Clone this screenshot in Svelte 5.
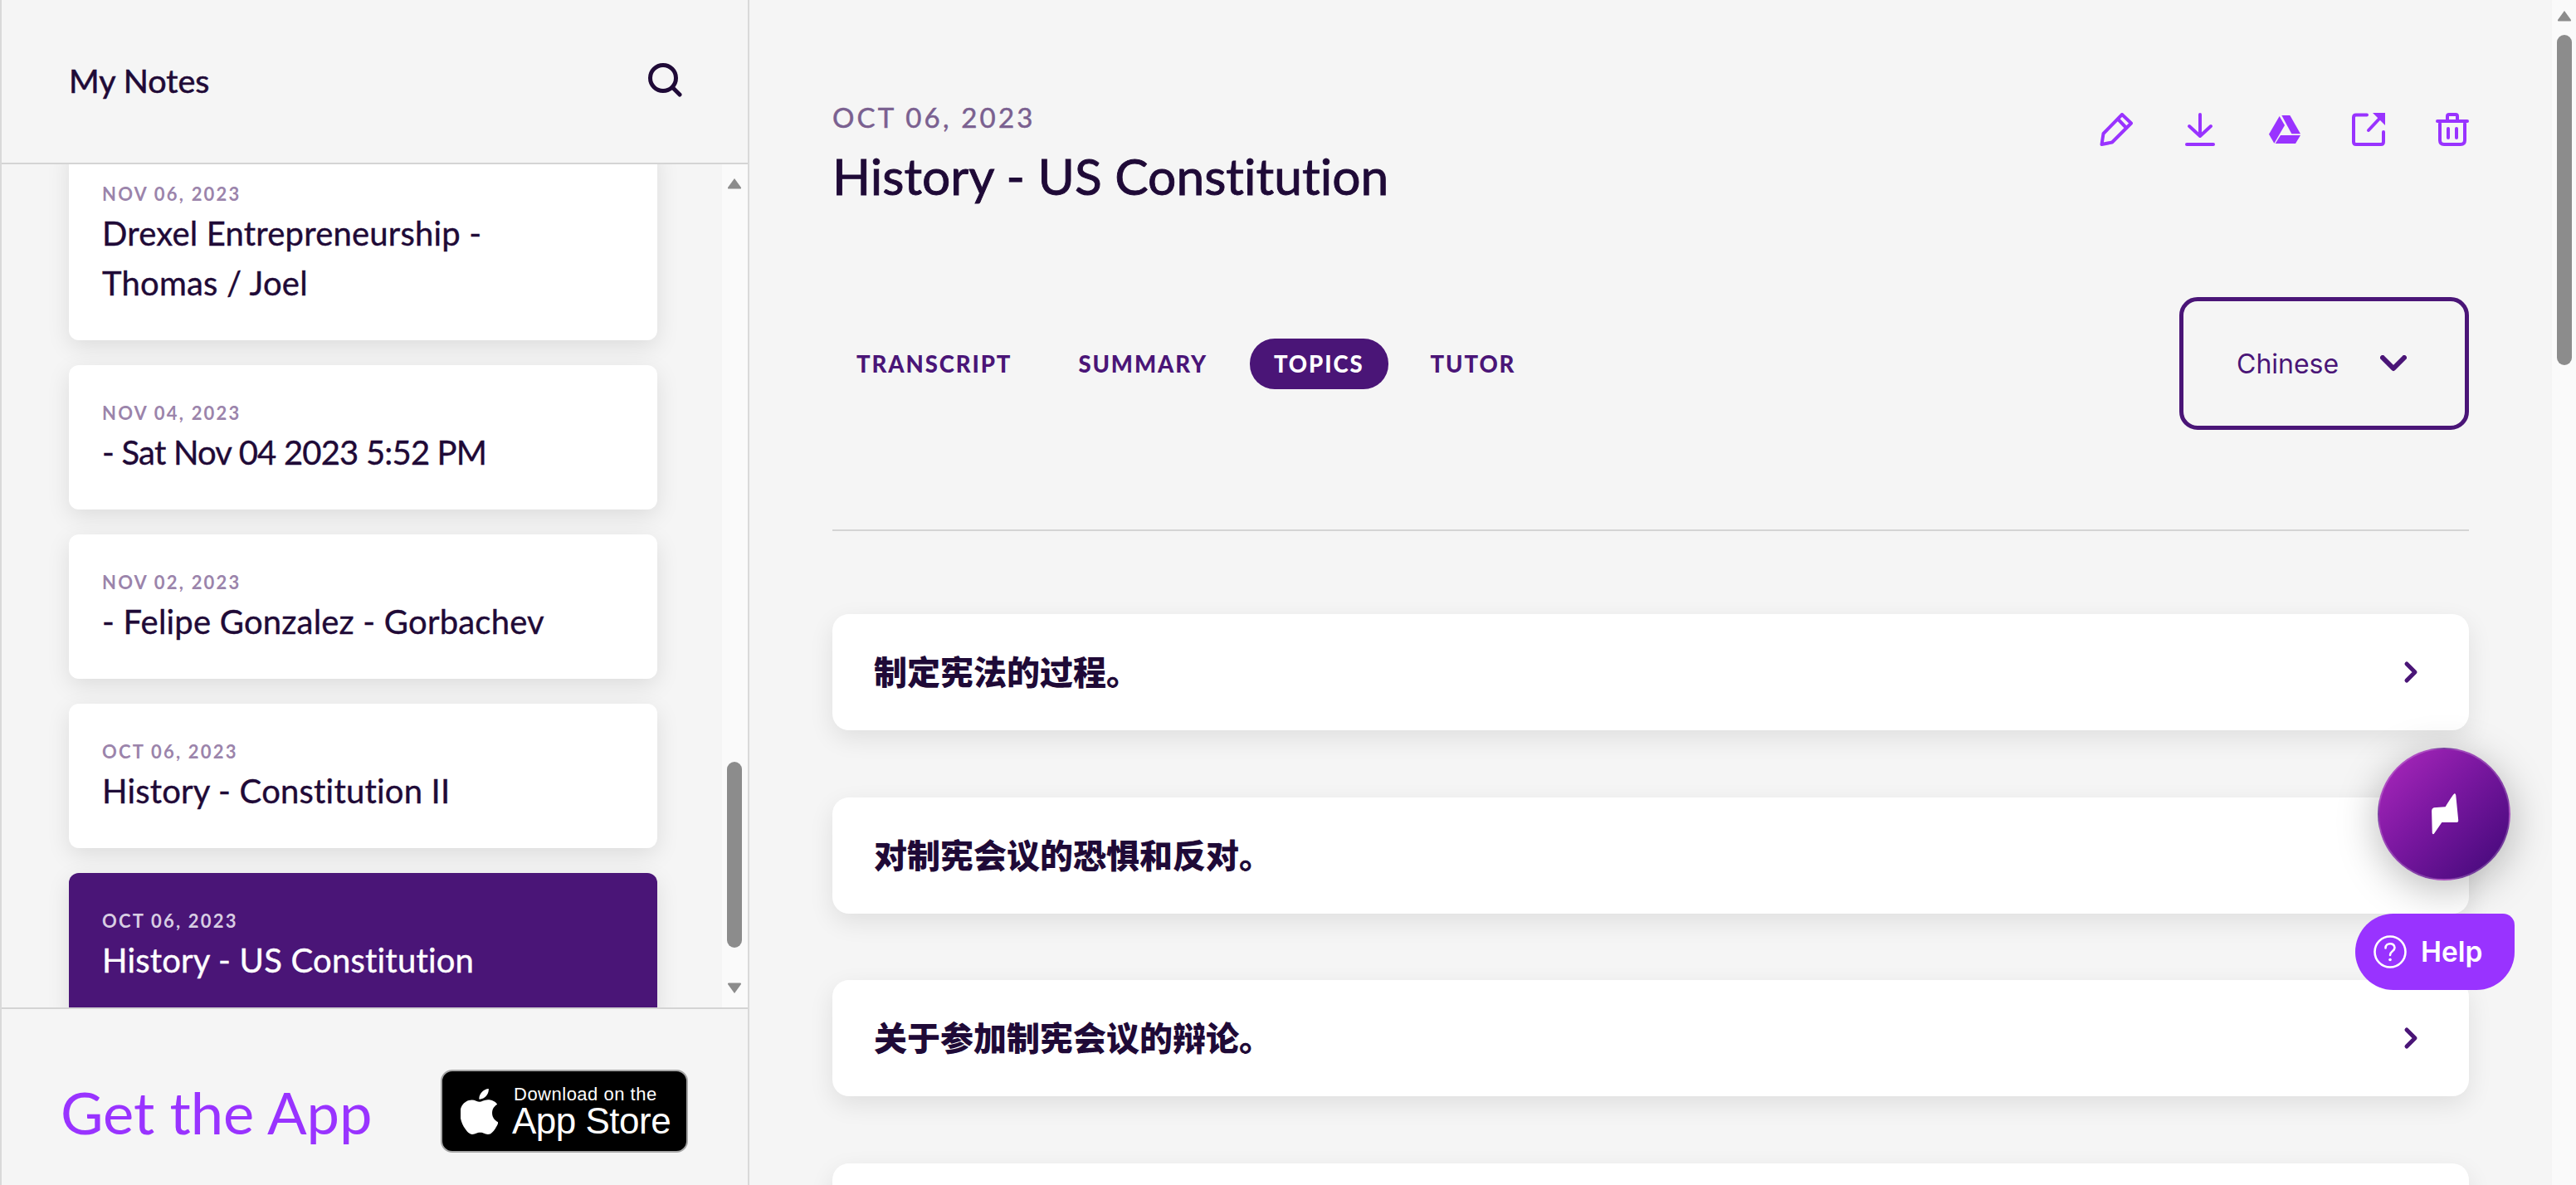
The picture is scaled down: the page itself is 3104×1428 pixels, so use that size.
<script>
  const notes = [
    { date: 'NOV 06, 2023', title: 'Drexel Entrepreneurship - Thomas / Joel' },
    { date: 'NOV 04, 2023', title: '- Sat Nov 04 2023 5:52\u202FPM', tight: true },
    { date: 'NOV 02, 2023', title: '- Felipe Gonzalez - Gorbachev' },
    { date: 'OCT 06, 2023', title: 'History - Constitution II' },
    { date: 'OCT 06, 2023', title: 'History - US Constitution', active: true }
  ];
  const tabs = ['TRANSCRIPT', 'SUMMARY', 'TOPICS', 'TUTOR'];
  const topics = ['制定宪法的过程。', '对制宪会议的恐惧和反对。', '关于参加制宪会议的辩论。', ''];
</script>

<div class="app">
  <aside class="sidebar">
    <header class="side-head">
      <h2>My Notes</h2>
      <svg class="search" viewBox="0 0 42 42" width="42" height="42" fill="none" stroke="#1f0a37" stroke-width="5" stroke-linecap="round">
        <circle cx="19" cy="19" r="15.5" />
        <path d="M31 31 L39 39" />
      </svg>
    </header>
    <div class="side-body">
      <div class="note-list">
        {#each notes as n}
          <div class="note" class:active={n.active}>
            <div class="note-date">{n.date}</div>
            <div class="note-title" class:tight={n.tight}>{n.title}</div>
          </div>
        {/each}
      </div>
      <div class="side-track">
        <svg class="arrow" viewBox="0 0 18 14" width="18" height="14"><path d="M9 1 L17 12 Q17.500 13.500 16 13.500 H2 Q0.500 13.500 1 12 Z" fill="#8c8c8c" /></svg>
        <div class="side-thumb"></div>
        <svg class="arrow down" viewBox="0 0 18 14" width="18" height="14"><path d="M9 13 L17 2 Q17.500 0.500 16 0.500 H2 Q0.500 0.500 1 2 Z" fill="#8c8c8c" /></svg>
      </div>
    </div>
    <footer class="side-foot">
      <span class="get">Get the App</span>
      <div class="badge">
        <svg viewBox="2.500 0 19 24" width="45" height="55" preserveAspectRatio="none" fill="#fff"><path d="M12.152 6.896c-.948 0-2.415-1.078-3.96-1.04-2.04.027-3.91 1.183-4.961 3.014-2.117 3.675-.546 9.103 1.519 12.09 1.013 1.454 2.208 3.09 3.792 3.039 1.52-.065 2.09-.987 3.935-.987 1.831 0 2.35.987 3.96.948 1.637-.026 2.676-1.48 3.676-2.948 1.156-1.688 1.636-3.325 1.662-3.415-.039-.013-3.182-1.221-3.22-4.857-.026-3.04 2.48-4.494 2.597-4.559-1.429-2.09-3.623-2.324-4.39-2.376-2-.156-3.675 1.09-4.61 1.09zM15.53 3.83c.843-1.012 1.4-2.427 1.245-3.83-1.207.052-2.662.805-3.532 1.818-.78.896-1.454 2.338-1.273 3.714 1.338.104 2.715-.688 3.559-1.701" /></svg>
        <div class="badge-text">
          <span class="b1">Download on the</span>
          <span class="b2">App Store</span>
        </div>
      </div>
    </footer>
  </aside>

  <main class="main">
    <section class="head">
      <div>
        <div class="date">OCT 06, 2023</div>
        <h1>History - US Constitution</h1>
      </div>
      <div class="tools">
        <svg viewBox="0 0 40 40" width="40" height="40" fill="none" stroke="#9933ff" stroke-width="4" stroke-linejoin="round" stroke-linecap="round"><path d="M27 2 L38 12.500 L15 35.500 L2.500 38 L4.500 25 Z" /><path d="M22.500 8 L32 18" /></svg>
        <svg viewBox="0 0 36 40" width="40" height="40" fill="none" stroke="#9933ff" stroke-width="4" stroke-linejoin="round" stroke-linecap="round"><path d="M18 2 V27" /><path d="M5 16 L18 28 L31 16" /><path d="M2 38 H34" /></svg>
        <svg viewBox="696 76 120 120" width="40" height="40" fill="#9933ff"><path d="M737 88 L699 153 L718 186 L756 121 Z" /><path d="M745 85 H775 L813 152 H781 Z" /><path d="M741 157 H813 L795 187 H722 Z" /></svg>
        <svg viewBox="0 0 40 40" width="40" height="40" fill="none" stroke="#9933ff" stroke-width="4" stroke-linejoin="round" stroke-linecap="round"><path d="M18 2.500 H5 Q2 2.500 2 5.500 V35 Q2 38 5 38 H35 Q38 38 38 35 V23" /><path d="M20 21 L34 6" /><path d="M25 0 H40 V15 Z" fill="#9933ff" stroke="none" /></svg>
        <svg viewBox="0 0 40 40" width="40" height="40" fill="none" stroke="#9933ff" stroke-width="4" stroke-linejoin="round" stroke-linecap="round"><path d="M2 10 H38" /><path d="M14 9 V4 Q14 2 16 2 H24 Q26 2 26 4 V9" /><path d="M5 13 V33 Q5 38 10 38 H30 Q35 38 35 33 V13" /><path d="M15 19 V30" /><path d="M25 19 V30" /></svg>
      </div>
    </section>

    <section class="tabbar">
      <nav class="tabs">
        {#each tabs as t}
          <span class="tab" class:on={t === 'TOPICS'}>{t}</span>
        {/each}
      </nav>
      <div class="select">
        <span>Chinese</span>
        <svg viewBox="0 0 32 20" width="32" height="20" fill="none" stroke="#4a1577" stroke-width="6" stroke-linecap="round" stroke-linejoin="round"><path d="M3 3 L16 16 L29 3" /></svg>
      </div>
    </section>

    <hr />

    <section class="topics">
      {#each topics as t}
        <div class="topic">
          <span>{t}</span>
          <svg viewBox="0 0 18 28" width="18" height="28" fill="none" stroke="#4a1577" stroke-width="5" stroke-linecap="round" stroke-linejoin="round"><path d="M4 4 L14 14 L4 24" /></svg>
        </div>
      {/each}
    </section>

    <div class="fab">
      <svg viewBox="435 222 120 160" width="40" height="53" fill="#fff"><path d="M533 226 C528 228 510 258 500 274 L458 277 Q450 280 450 290 L452 370 Q455 378 460 370 L487 331 L543 331 Q548 330 547 322 L538 232 Q536 224 533 226 Z" /></svg>
    </div>
    <div class="help">
      <svg viewBox="0 0 40 40" width="40" height="40" fill="none" stroke="#fff" stroke-width="2.600"><circle cx="20" cy="20" r="18.500" /><path d="M14.500 15.500 C14.500 8.500 25.500 8.500 25.500 15 C25.500 19.500 20 19 20 24" stroke-linecap="round" /><circle cx="20" cy="29.500" r="1.800" fill="#fff" stroke="none" /></svg>
      <span>Help</span>
    </div>
  </main>

  <div class="page-track">
    <svg class="arrow top" viewBox="0 0 18 14" width="18" height="14"><path d="M9 1 L17 12 Q17.500 13.500 16 13.500 H2 Q0.500 13.500 1 12 Z" fill="#8c8c8c" /></svg>
    <div class="page-thumb"></div>
  </div>
</div>

<style>
  :global(body) {
    margin: 0;
    background: #f5f5f5;
  }
  .app {
    display: flex;
    width: 3104px;
    height: 1428px;
    overflow: hidden;
    font-family: "Lato", "Noto Sans CJK SC", sans-serif;
    font-variant-ligatures: none;
    color: #1f0a37;
  }
  .sidebar {
    width: 903px;
    flex: none;
    box-sizing: border-box;
    display: flex;
    flex-direction: column;
    border-left: 2px solid #d9d9d9;
    border-right: 2px solid #d9d9d9;
    background: #f5f5f5;
  }
  .side-head {
    height: 198px;
    flex: none;
    box-sizing: border-box;
    display: flex;
    align-items: center;
    justify-content: space-between;
    padding: 0 79px 4px 81px;
    border-bottom: 2px solid #d4d4d4;
  }
  .side-head h2 {
    margin: 0;
    font-size: 39.5px;
    font-weight: 400;
    -webkit-text-stroke: 0.6px #1f0a37;
  }
  .side-body {
    flex: 1;
    min-height: 0;
    display: flex;
    overflow: hidden;
  }
  .note-list {
    width: 868px;
    box-sizing: border-box;
    padding: 0 78px 0 81px;
    margin-top: -22px;
    display: flex;
    flex-direction: column;
    gap: 30px;
  }
  .note {
    background: #fff;
    border-radius: 12px;
    padding: 42px 40px 39px;
    box-shadow: 0 8px 28px rgba(0, 0, 0, 0.1);
    flex: none;
  }
  .note-date {
    font-size: 22px;
    font-weight: 700;
    letter-spacing: 2.2px;
    line-height: 32px;
    color: #9b84ab;
  }
  .note-title {
    font-size: 40px;
    line-height: 60px;
    margin-top: 1px;
    font-weight: 400;
    max-width: 540px;
    letter-spacing: 0.2px;
    -webkit-text-stroke: 0.4px currentColor;
  }
  .note-title.tight {
    letter-spacing: -0.8px;
  }
  .note.active {
    background: #4a1577;
  }
  .note.active .note-date {
    color: #d8cde3;
  }
  .note.active .note-title {
    color: #fff;
    max-width: none;
  }
  .note:not(:first-child) .note-title {
    max-width: none;
  }
  .side-track {
    width: 31px;
    flex: none;
    background: #fafafa;
    display: flex;
    flex-direction: column;
    align-items: center;
    padding: 16px 2px 16px 0;
    box-sizing: border-box;
  }
  .side-thumb {
    width: 18px;
    height: 224px;
    background: #8c8c8c;
    border-radius: 9px;
    margin-top: auto;
    margin-bottom: 42px;
  }
  .side-foot {
    height: 214px;
    flex: none;
    box-sizing: border-box;
    border-top: 2px solid #d4d4d4;
    display: flex;
    align-items: center;
    justify-content: space-between;
    padding: 34px 72px 0 71px;
  }
  .get {
    font-size: 70.5px;
    color: #9933ff;
    font-weight: 400;
  }
  .badge {
    width: 298px;
    height: 100px;
    box-sizing: border-box;
    background: #000;
    border: 2px solid #a6a6a6;
    border-radius: 14px;
    display: flex;
    align-items: center;
    gap: 17px;
    padding: 0 0 0 22px;
    color: #fff;
    font-family: "Liberation Sans", sans-serif;
  }
  .badge-text {
    display: flex;
    flex-direction: column;
  }
  .b1 {
    font-size: 22px;
    line-height: 24px;
    letter-spacing: 0.5px;
    margin: 2px 0 -2px 2px;
  }
  .b2 {
    font-size: 44px;
    line-height: 44px;
    letter-spacing: -0.5px;
  }
  .main {
    flex: 1;
    min-width: 0;
    background: #f5f5f5;
    padding: 0 100px;
    position: relative;
    overflow: hidden;
  }
  .head {
    display: flex;
    justify-content: space-between;
    align-items: flex-start;
    height: 260px;
    box-sizing: border-box;
    padding-top: 118px;
  }
  .date {
    font-size: 33px;
    line-height: 46px;
    letter-spacing: 3.2px;
    color: #7a6090;
    font-weight: 400;
    -webkit-text-stroke: 0.5px #7a6090;
  }
  h1 {
    margin: 6px 0 0;
    font-size: 60.5px;
    line-height: 84px;
    font-weight: 400;
    -webkit-text-stroke: 0.9px #1f0a37;
  }
  .tools {
    display: flex;
    align-items: center;
    gap: 61.25px;
    margin-top: 18px;
  }
  .tabbar {
    display: flex;
    justify-content: space-between;
    align-items: center;
    padding: 98px 0 120px;
  }
  .tabs {
    display: flex;
    gap: 22px;
  }
  .tab {
    height: 61px;
    line-height: 61px;
    padding: 0 29px;
    border-radius: 30px;
    font-size: 27.5px;
    font-weight: 900;
    letter-spacing: 1.9px;
    color: #4a1577;
  }
  .tab.on {
    background: #4a1577;
    color: #fff;
  }
  .select {
    width: 349px;
    height: 160px;
    box-sizing: border-box;
    border: 5px solid #4a1577;
    border-radius: 22px;
    display: flex;
    align-items: center;
    gap: 50px;
    padding-left: 64px;
    font-family: "Inter", sans-serif;
    font-size: 32px;
    color: #4a1577;
  }
  hr {
    margin: 0 0 100px;
    border: 0;
    height: 2px;
    background: #d4d4d4;
  }
  .topics {
    display: flex;
    flex-direction: column;
    gap: 80.5px;
  }
  .topic {
    height: 140px;
    flex: none;
    background: #fff;
    border-radius: 20px;
    box-shadow: 0 10px 30px rgba(0, 0, 0, 0.09);
    display: flex;
    align-items: center;
    justify-content: space-between;
    padding: 0 61px 0 50px;
    font-family: "Noto Sans CJK SC", sans-serif;
    font-size: 40px;
    font-weight: 900;
  }
  .topic span {
    margin-top: -4px;
  }
  .fab {
    position: absolute;
    left: 1962px;
    top: 901px;
    width: 160px;
    height: 160px;
    box-sizing: border-box;
    border-radius: 50%;
    border: 2px solid rgba(255, 255, 255, 0.2);
    background: linear-gradient(135deg, #ac28bd, #7a17a0 45%, #3f0877);
    box-shadow: 0 10px 50px rgba(0, 0, 0, 0.28);
    display: flex;
    align-items: center;
    justify-content: center;
  }
  .help {
    position: absolute;
    left: 1935px;
    top: 1101px;
    width: 192px;
    height: 92px;
    box-sizing: border-box;
    padding-left: 22px;
    background: #9933ff;
    border-radius: 46px 14px 46px 46px;
    display: flex;
    align-items: center;
    gap: 17px;
    color: #fff;
    font-family: "Inter", sans-serif;
    font-size: 33.5px;
    font-weight: 600;
  }
  .page-track {
    width: 29px;
    flex: none;
    background: #fafafa;
    display: flex;
    flex-direction: column;
    align-items: center;
    padding-top: 12px;
    box-sizing: border-box;
  }
  .page-thumb {
    width: 18px;
    height: 398px;
    margin-top: 16px;
    background: #8c8c8c;
    border-radius: 9px;
  }
</style>
